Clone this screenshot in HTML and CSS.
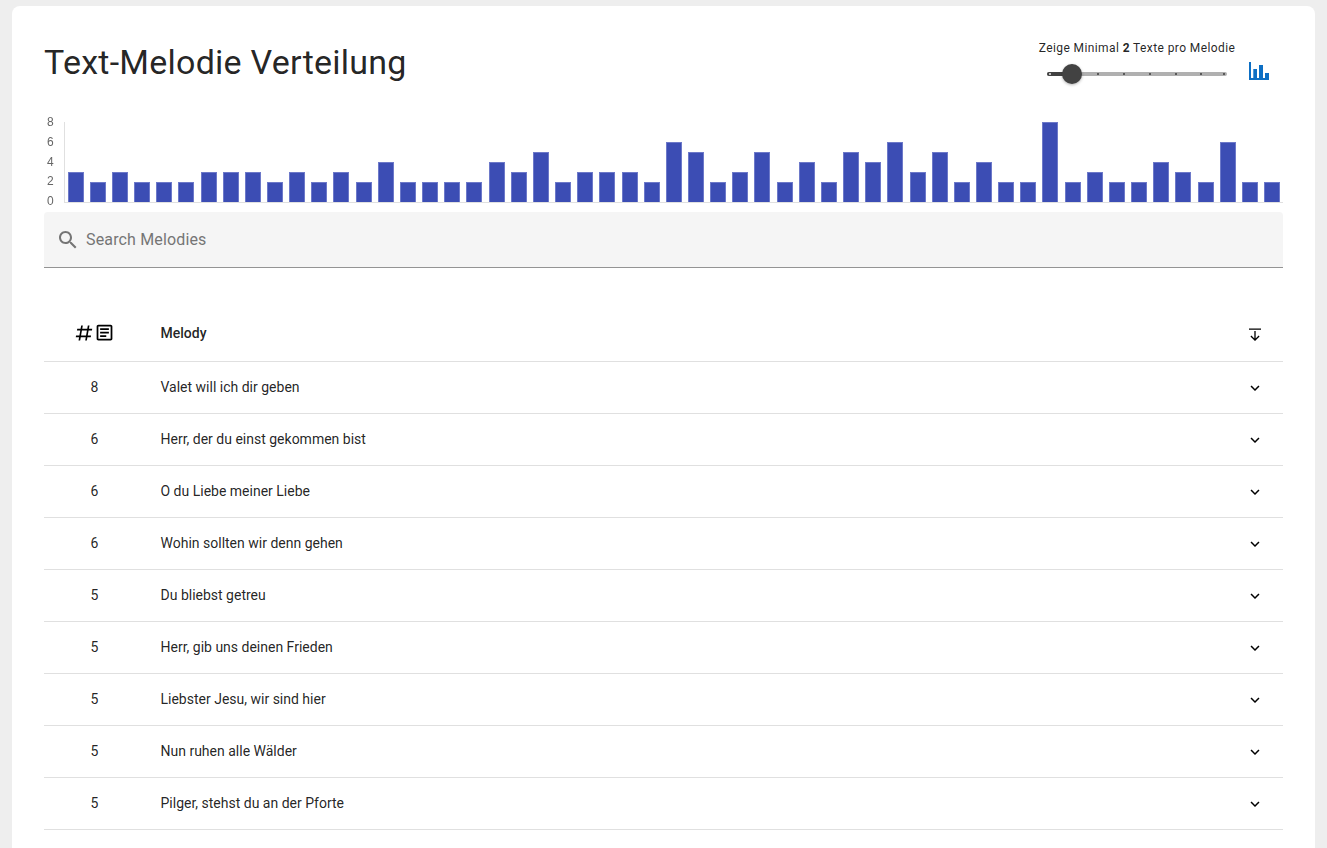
FILE: index.html
```html
<!DOCTYPE html>
<html lang="de">
<head>
<meta charset="utf-8">
<title>Text-Melodie Verteilung</title>
<link rel="stylesheet" href="styles.css">
</head>
<body>
<main class="card">
  <header class="head">
    <h1 class="title">Text-Melodie Verteilung</h1>
    <div class="controls">
      <div class="slider-box">
        <div class="slider-label">Zeige Minimal <b>2</b> Texte pro Melodie</div>
        <div class="slider">
          <div class="rail"><i style="left:28.57%"></i><i style="left:42.86%"></i><i style="left:57.14%"></i><i style="left:71.43%"></i><i style="left:85.71%"></i><i class="last"></i></div>
          <div class="track"><i></i></div>
          <div class="thumb"></div>
        </div>
      </div>
      <svg class="chart-icon" viewBox="0 0 20 18" width="20" height="18"><path fill="#0d6fc4" d="M0 0h2v16h18v2H0zM4.300 7H8v9H4.300zM10 3h4v13h-4zM16 11h4v5h-4z"/></svg>
    </div>
  </header>
  <section class="chart">
    <div class="y-axis"><span>8</span><span>6</span><span>4</span><span>2</span><span>0</span></div>
    <div class="plot">
      <b style="height:30px"></b><b style="height:20px"></b><b style="height:30px"></b><b style="height:20px"></b><b style="height:20px"></b><b style="height:20px"></b><b style="height:30px"></b><b style="height:30px"></b><b style="height:30px"></b><b style="height:20px"></b><b style="height:30px"></b><b style="height:20px"></b><b style="height:30px"></b><b style="height:20px"></b><b style="height:40px"></b><b style="height:20px"></b><b style="height:20px"></b><b style="height:20px"></b><b style="height:20px"></b><b style="height:40px"></b><b style="height:30px"></b><b style="height:50px"></b><b style="height:20px"></b><b style="height:30px"></b><b style="height:30px"></b><b style="height:30px"></b><b style="height:20px"></b><b style="height:60px"></b><b style="height:50px"></b><b style="height:20px"></b><b style="height:30px"></b><b style="height:50px"></b><b style="height:20px"></b><b style="height:40px"></b><b style="height:20px"></b><b style="height:50px"></b><b style="height:40px"></b><b style="height:60px"></b><b style="height:30px"></b><b style="height:50px"></b><b style="height:20px"></b><b style="height:40px"></b><b style="height:20px"></b><b style="height:20px"></b><b style="height:80px"></b><b style="height:20px"></b><b style="height:30px"></b><b style="height:20px"></b><b style="height:20px"></b><b style="height:40px"></b><b style="height:30px"></b><b style="height:20px"></b><b style="height:60px"></b><b style="height:20px"></b><b style="height:20px"></b>
    </div>
  </section>
  <div class="search">
    <svg class="search-icon" viewBox="0 0 24 24" width="24" height="24"><path d="M15.500 14h-.79l-.28-.27C15.410 12.590 16 11.110 16 9.500 16 5.910 13.090 3 9.500 3S3 5.910 3 9.500 5.910 16 9.500 16c1.610 0 3.090-.59 4.230-1.570l.27.28v.79l5 4.990L20.490 19l-4.990-5zm-6 0C7.010 14 5 11.990 5 9.500S7.010 5 9.500 5 14 7.010 14 9.500 11.990 14 9.500 14z"/></svg>
    <span class="placeholder">Search Melodies</span>
  </div>
  <div class="table">
    <div class="row row-head">
      <div class="num">
        <svg viewBox="0 0 24 24" width="20" height="20"><path d="M5.410 21 6.120 17H2.120L2.470 15H6.470L7.530 9H3.530L3.880 7H7.880L8.590 3H10.590L9.880 7H15.880L16.590 3H18.590L17.880 7H21.880L21.530 9H17.530L16.470 15H20.470L20.120 17H16.120L15.410 21H13.410L14.120 17H8.120L7.410 21H5.410M9.530 9 8.470 15H14.470L15.530 9H9.530Z"/></svg>
        <svg viewBox="0 0 24 24" width="21" height="21"><path d="M19 5v14H5V5h14m0-2H5c-1.100 0-2 .9-2 2v14c0 1.100.9 2 2 2h14c1.100 0 2-.9 2-2V5c0-1.100-.9-2-2-2zM14 17H7v-2h7v2zm3-4H7v-2h10v2zm0-4H7V7h10v2z"/></svg>
      </div>
      <div class="name">Melody</div>
      <svg class="chev sort" viewBox="0 0 18 18" width="18" height="18"><path d="M3 2.500h12v1.300H3zM8.350 5h1.300v7.500l3-3 .9.900L9 15 4.450 10.400l.9-.9 3 3z"/></svg>
    </div>
    <div class="row"><div class="num">8</div><div class="name">Valet will ich dir geben</div><svg class="chev" viewBox="0 0 24 24" width="18" height="18"><path d="M7.410 8.590 12 13.170l4.590-4.580L18 10l-6 6-6-6z"/></svg></div>
    <div class="row"><div class="num">6</div><div class="name">Herr, der du einst gekommen bist</div><svg class="chev" viewBox="0 0 24 24" width="18" height="18"><path d="M7.410 8.590 12 13.170l4.590-4.580L18 10l-6 6-6-6z"/></svg></div>
    <div class="row"><div class="num">6</div><div class="name">O du Liebe meiner Liebe</div><svg class="chev" viewBox="0 0 24 24" width="18" height="18"><path d="M7.410 8.590 12 13.170l4.590-4.580L18 10l-6 6-6-6z"/></svg></div>
    <div class="row"><div class="num">6</div><div class="name">Wohin sollten wir denn gehen</div><svg class="chev" viewBox="0 0 24 24" width="18" height="18"><path d="M7.410 8.590 12 13.170l4.590-4.580L18 10l-6 6-6-6z"/></svg></div>
    <div class="row"><div class="num">5</div><div class="name">Du bliebst getreu</div><svg class="chev" viewBox="0 0 24 24" width="18" height="18"><path d="M7.410 8.590 12 13.170l4.590-4.580L18 10l-6 6-6-6z"/></svg></div>
    <div class="row"><div class="num">5</div><div class="name">Herr, gib uns deinen Frieden</div><svg class="chev" viewBox="0 0 24 24" width="18" height="18"><path d="M7.410 8.590 12 13.170l4.590-4.580L18 10l-6 6-6-6z"/></svg></div>
    <div class="row"><div class="num">5</div><div class="name">Liebster Jesu, wir sind hier</div><svg class="chev" viewBox="0 0 24 24" width="18" height="18"><path d="M7.410 8.590 12 13.170l4.590-4.580L18 10l-6 6-6-6z"/></svg></div>
    <div class="row"><div class="num">5</div><div class="name">Nun ruhen alle Wälder</div><svg class="chev" viewBox="0 0 24 24" width="18" height="18"><path d="M7.410 8.590 12 13.170l4.590-4.580L18 10l-6 6-6-6z"/></svg></div>
    <div class="row"><div class="num">5</div><div class="name">Pilger, stehst du an der Pforte</div><svg class="chev" viewBox="0 0 24 24" width="18" height="18"><path d="M7.410 8.590 12 13.170l4.590-4.580L18 10l-6 6-6-6z"/></svg></div>
  </div>
</main>
</body>
</html>
```
FILE: styles.css
```css
* { box-sizing: border-box; }
html, body { height: 100%; overflow: hidden; }
body {
  margin: 0;
  padding: 6px 12px 0;
  background: #eeeeee;
  font-family: Roboto, "Liberation Sans", sans-serif;
  color: rgba(0, 0, 0, 0.87);
}
.card {
  background: #fff;
  border-radius: 8px;
  padding: 0 32px;
  height: 1000px;
}
.head {
  display: flex;
  justify-content: space-between;
  height: 116px;
}
.title {
  margin: 34px 0 0 0;
  font-size: 34px;
  line-height: 44px;
  font-weight: 400;
  letter-spacing: 0.25px;
}
.controls {
  display: flex;
  margin-top: 34px;
  margin-right: 14px;
}
.slider-box { width: 200px; }
.slider-label {
  font-size: 12px;
  line-height: 16px;
  letter-spacing: 0.4px;
  text-align: center;
  white-space: nowrap;
}
.slider-label b { font-weight: 700; }
.slider {
  position: relative;
  height: 28px;
  margin: 4px 10px 0;
}
.rail {
  position: absolute;
  left: 0;
  right: 0;
  top: 12px;
  height: 4px;
  border-radius: 2px;
  background: #b0b0b0;
}
.rail i {
  position: absolute;
  top: 1px;
  width: 2px;
  height: 2px;
  margin-left: -1px;
  border-radius: 50%;
  background: #3c3c3c;
}
.rail .last { right: 2px; margin-left: 0; }
.track {
  position: absolute;
  left: 0;
  top: 12px;
  width: 25px;
  height: 4px;
  border-radius: 2px 0 0 2px;
  background: #424242;
}
.track i {
  position: absolute;
  left: 2px;
  top: 1px;
  width: 2px;
  height: 2px;
  border-radius: 50%;
  background: #e8e8e8;
}
.thumb {
  position: absolute;
  left: 15px;
  top: 4px;
  width: 20px;
  height: 20px;
  border-radius: 50%;
  background: #424242;
  box-shadow: 0 1px 3px rgba(0, 0, 0, 0.3);
}
.chart-icon { margin: 22px 0 0 12px; }
.chart {
  display: flex;
  height: 90px;
}
.y-axis {
  width: 20px;
  height: 95px;
  margin-top: -8px;
  padding: 0 10px 0 3px;
  display: flex;
  flex-direction: column;
  justify-content: space-between;
  font: 12px/16px "Liberation Sans", Arial, sans-serif;
  color: #666;
  will-change: transform;
}
.plot {
  flex: 1;
  height: 80px;
  display: flex;
  align-items: flex-end;
  border-left: 1px solid #e0e0e0;
  border-bottom: 1px solid #e0e0e0;
  box-sizing: content-box;
  padding: 0 3.300px 0 2.600px;
  gap: 6.150px;
}
.plot b {
  flex: 1;
  background: #3c4db4;
  border: 1px solid #6d79c9;
  border-bottom: 0;
}
.search {
  display: flex;
  align-items: center;
  height: 56px;
  background: #f5f5f5;
  border-bottom: 1px solid #949494;
  border-radius: 4px 4px 0 0;
  padding-left: 12px;
  gap: 6px;
}
.search-icon { fill: #757575; }
.placeholder { font-size: 16px; color: #757575; letter-spacing: 0.15px; }
.table { margin-top: 26px; }
.row {
  display: flex;
  align-items: center;
  height: 52px;
  border-bottom: 1px solid #e0e0e0;
  font-size: 14px;
  padding-right: 19px;
}
.row-head { height: 68px; font-weight: 500; padding-top: 10px; }
.num {
  width: 101px;
  display: flex;
  justify-content: center;
  align-items: center;
  margin-top: -2px;
}
.row-head .num { margin-top: 0; }
.name { flex: 1; margin-left: 15.500px; margin-top: -2px; }
.row-head .name { margin-top: 0; }
.chev { flex: none; }
.sort { margin-top: 4px; }
```
